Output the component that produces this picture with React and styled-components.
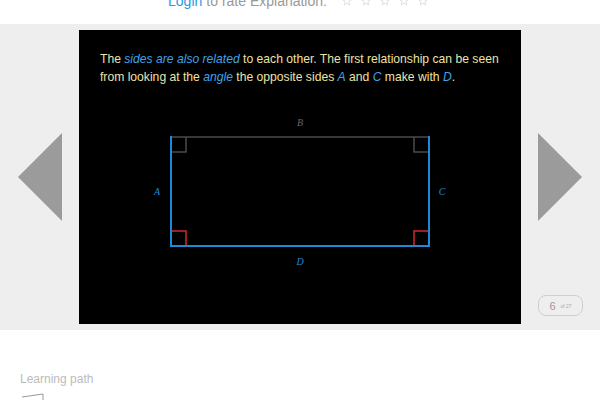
import React from "react";
import styled, { createGlobalStyle } from "styled-components";

const Global = createGlobalStyle`
  html, body {
    margin: 0;
    padding: 0;
    background: #fff;
    font-family: "Liberation Sans", Arial, sans-serif;
    overflow: hidden;
  }
`;

const RateBar = styled.div`
  height: 24px;
  display: flex;
  justify-content: center;
  align-items: flex-start;
  overflow: hidden;
`;

const RateRow = styled.div`
  display: flex;
  align-items: center;
  margin-top: -9px;
  margin-right: 4px;
  line-height: 20px;
  font-size: 14px;
  color: #999;
`;

const LoginLink = styled.a`
  color: #2a9be0;
  text-decoration: none;
  margin-right: 4px;
`;

const Stars = styled.div`
  display: flex;
  gap: 9px;
  margin-left: 15px;
`;

const Stage = styled.div`
  height: 306px;
  background: #eeeeee;
  display: flex;
  align-items: stretch;
  padding: 6px 18px;
  box-sizing: border-box;
  gap: 17px;
`;

const Side = styled.div`
  width: 45px;
  display: grid;
  grid-template-rows: 1fr auto 1fr;
  justify-items: ${p => (p.right ? "start" : "end")};
`;

const Arrow = styled.div`
  grid-row: 2;
  width: 0;
  height: 0;
  border-top: 44px solid transparent;
  border-bottom: 44px solid transparent;
  ${p =>
    p.right
      ? "border-left: 44px solid #9b9b9b;"
      : "border-right: 44px solid #9b9b9b;"}
`;

const Counter = styled.div`
  grid-row: 3;
  align-self: end;
  margin-bottom: 8px;
  width: 45px;
  height: 21px;
  box-sizing: border-box;
  border: 1px solid #cfcfcf;
  border-radius: 8px;
  display: flex;
  align-items: center;
  justify-content: center;
  gap: 5px;
  color: #999;
  font-size: 11px;
`;

const Small = styled.span`
  font-size: 5px;
  color: #aaa;
`;

const Panel = styled.div`
  width: 442px;
  background: #000;
  display: flex;
  flex-direction: column;
`;

const Caption = styled.p`
  margin: 0;
  padding: 20px 21px 30px;
  font-size: 12.15px;
  line-height: 18px;
  color: #ede3a6;
`;

const Hl = styled.em`
  color: #3fa3ea;
  font-style: italic;
`;

const LearnSection = styled.div`
  padding: 42px 20px 0;
`;

const LearnTitle = styled.div`
  font-size: 12px;
  color: #bbb;
  line-height: 14px;
`;

const PathIcon = styled.svg`
  display: block;
  margin-top: 4px;
`;

const Star = () => (
  <svg width="10" height="10" viewBox="0 0 24 24">
    <polygon
      points="12,2 15,9 22,9.3 16.5,14 18.5,21.5 12,17.3 5.5,21.5 7.5,14 2,9.3 9,9"
      fill="none"
      stroke="#d0d0d0"
      strokeWidth="1.6"
    />
  </svg>
);

const Diagram = () => (
  <svg width="442" height="208" viewBox="79 116 442 208">
    <g fill="none" strokeWidth="1.5">
      <path d="M171 137 H429" stroke="#4a4a4a" />
      <path d="M171 152 H186 V137" stroke="#4a4a4a" />
      <path d="M429 152 H414 V137" stroke="#4a4a4a" />
      <path d="M171 231 H186 V246" stroke="#d42a2a" />
      <path d="M429 231 H414 V246" stroke="#d42a2a" />
      <path d="M171 136 V246 H429 V136" stroke="#1e8ad6" strokeWidth="2" />
    </g>
    <g fontFamily="'Liberation Serif', serif" fontStyle="italic" fontSize="10" textAnchor="middle">
      <text x="300" y="126" fill="#666">B</text>
      <text x="157" y="195" fill="#1e8ad6">A</text>
      <text x="442" y="195" fill="#1e8ad6">C</text>
      <text x="300" y="265" fill="#1e8ad6">D</text>
    </g>
  </svg>
);

export default function App() {
  return (
    <>
      <Global />
      <RateBar>
        <RateRow>
          <LoginLink href="#">Login</LoginLink> to rate Explanation:
          <Stars>
            {[0, 1, 2, 3, 4].map(i => (
              <Star key={i} />
            ))}
          </Stars>
        </RateRow>
      </RateBar>
      <Stage>
        <Side>
          <Arrow />
        </Side>
        <Panel>
          <Caption>
            The <Hl>sides are also related</Hl> to each other. The first
            relationship can be seen from looking at the <Hl>angle</Hl> the
            opposite sides <Hl>A</Hl> and <Hl>C</Hl> make with <Hl>D</Hl>.
          </Caption>
          <Diagram />
        </Panel>
        <Side right>
          <Arrow right />
          <Counter>
            6 <Small>of 27</Small>
          </Counter>
        </Side>
      </Stage>
      <LearnSection>
        <LearnTitle>Learning path</LearnTitle>
        <PathIcon width="30" height="12">
          <path d="M2 7 L23 4 V10" fill="none" stroke="#999" strokeWidth="1" />
        </PathIcon>
      </LearnSection>
    </>
  );
}
